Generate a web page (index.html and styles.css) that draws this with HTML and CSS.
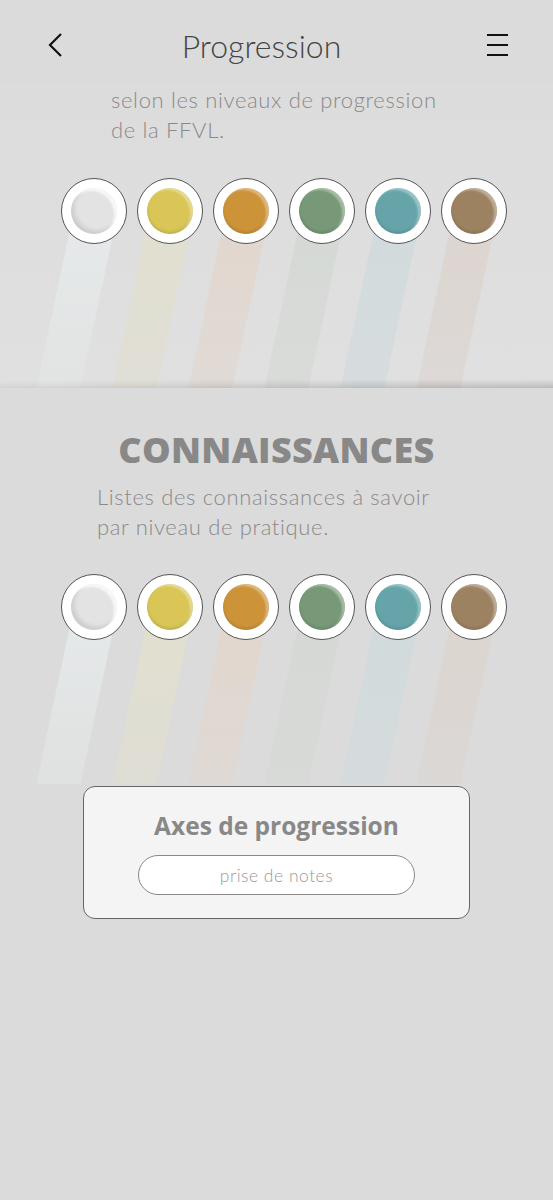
FILE: index.html
```html
<!DOCTYPE html>
<html lang="fr">
<head>
<meta charset="utf-8">
<title>Progression</title>
<link rel="stylesheet" href="styles.css">
</head>
<body>
<div class="screen">
  <header class="topbar">
    <svg class="icon back" width="24" height="30" viewBox="0 0 24 30"><path d="M17 4 L6 15 L17 26" fill="none" stroke="#111" stroke-width="2.2"/></svg>
    <h1 class="title">Progression</h1>
    <svg class="icon menu" width="24" height="30" viewBox="0 0 24 30"><path d="M2 5 H23 M2 15 H23 M2 25 H23" fill="none" stroke="#111" stroke-width="2.2"/></svg>
  </header>

  <section class="panel panel-top">
    <p class="intro">selon les niveaux de progression<br>de la FFVL.</p>
    <div class="levels">
      <div class="level lv-white"><span class="ring"><span class="dot"></span></span><span class="stripe"></span></div>
      <div class="level lv-yellow"><span class="ring"><span class="dot"></span></span><span class="stripe"></span></div>
      <div class="level lv-orange"><span class="ring"><span class="dot"></span></span><span class="stripe"></span></div>
      <div class="level lv-green"><span class="ring"><span class="dot"></span></span><span class="stripe"></span></div>
      <div class="level lv-teal"><span class="ring"><span class="dot"></span></span><span class="stripe"></span></div>
      <div class="level lv-brown"><span class="ring"><span class="dot"></span></span><span class="stripe"></span></div>
    </div>
  </section>

  <section class="panel panel-know">
    <h2 class="heading">CONNAISSANCES</h2>
    <p class="intro intro-know">Listes des connaissances à savoir<br>par niveau de pratique.</p>
    <div class="levels">
      <div class="level lv-white"><span class="ring"><span class="dot"></span></span><span class="stripe"></span></div>
      <div class="level lv-yellow"><span class="ring"><span class="dot"></span></span><span class="stripe"></span></div>
      <div class="level lv-orange"><span class="ring"><span class="dot"></span></span><span class="stripe"></span></div>
      <div class="level lv-green"><span class="ring"><span class="dot"></span></span><span class="stripe"></span></div>
      <div class="level lv-teal"><span class="ring"><span class="dot"></span></span><span class="stripe"></span></div>
      <div class="level lv-brown"><span class="ring"><span class="dot"></span></span><span class="stripe"></span></div>
    </div>
    <div class="card">
      <div class="card-title">Axes de progression</div>
      <div class="notes">prise de notes</div>
    </div>
  </section>
</div>
</body>
</html>
```

FILE: styles.css
```css
html, body {
  margin: 0;
  padding: 0;
  background: #dbdbdb;
}
body {
  font-family: Lato, "Open Sans", "Liberation Sans", sans-serif;
  color: #444;
}
.screen {
  width: 553px;
  min-height: 1200px;
  background: #dbdbdb;
  overflow: hidden;
}
.topbar {
  height: 78px;
  padding: 6px 44px 0 44px;
  display: flex;
  align-items: center;
  justify-content: space-between;
}
.icon { display: block; }
.title {
  margin: 0 30px 0 0;
  font-size: 32px;
  font-weight: 300;
  color: #444;
  letter-spacing: 0;
}
.panel { position: relative; }
.panel-top {
  padding-top: 1px;
  background: linear-gradient(#dcdcdc, #e0e0e0);
}
.panel-top::after {
  content: "";
  position: absolute;
  left: 0;
  right: 0;
  bottom: 0;
  height: 9px;
  background: linear-gradient(to bottom, rgba(0,0,0,0), rgba(0,0,0,0.06)),
              linear-gradient(to right, rgba(0,0,0,0), rgba(0,0,0,0.12));
  -webkit-mask: linear-gradient(to bottom, transparent, #000);
  mask: linear-gradient(to bottom, transparent, #000);
}
.intro {
  margin: 0 0 0 111px;
  font-size: 22px;
  line-height: 30px;
  font-weight: 300;
  letter-spacing: 0.65px;
  color: #8a8a8a;
}
.levels {
  display: flex;
  gap: 10px;
  padding-left: 61px;
  height: 210px;
  margin-top: 33px;
}
.level {
  width: 66px;
  display: flex;
  flex-direction: column;
  align-items: center;
}
.ring {
  position: relative;
  z-index: 2;
  box-sizing: border-box;
  width: 66px;
  height: 66px;
  border-radius: 50%;
  background: #fff;
  border: 1px solid #555;
  display: flex;
  align-items: center;
  justify-content: center;
  flex: none;
}
.dot {
  width: 46px;
  height: 46px;
  border-radius: 50%;
  background: var(--c);
  box-shadow: inset -3px 2px 2px rgba(255,255,255,0.35), inset 0 -2px 3px rgba(0,0,0,0.12);
}
.stripe {
  display: block;
  width: 44px;
  margin-left: -4px;
  height: 158px;
  margin-top: -14px;
  transform: skewX(-12deg);
  transform-origin: top;
  background: linear-gradient(to bottom, var(--s), var(--s2));
}
.lv-white  { --c: #e2e2e2; --s: rgba(232,236,236,0.8); --s2: rgba(228,231,231,0.5); }
.lv-yellow { --c: #d9c657; --s: rgba(226,224,206,0.9); --s2: rgba(224,222,210,0.7); }
.lv-orange { --c: #cc9339; --s: rgba(226,214,204,0.9); --s2: rgba(224,216,210,0.7); }
.lv-green  { --c: #779977; --s: rgba(212,216,212,0.9); --s2: rgba(214,217,214,0.7); }
.lv-teal   { --c: #65a5aa; --s: rgba(208,218,220,0.9); --s2: rgba(211,219,221,0.7); }
.lv-brown  { --c: #9d8262; --s: rgba(220,212,206,0.9); --s2: rgba(220,214,210,0.7); }
.lv-white .dot {
  background: #e3e3e3;
  box-shadow: inset -3px 3px 2px rgba(255,255,255,0.7), inset 3px -3px 4px rgba(0,0,0,0.1);
}
.panel-know {
  padding-top: 40px;
  background: #dbdbdb;
}
.heading {
  margin: 0;
  text-align: center;
  font-family: "Open Sans", Lato, sans-serif;
  font-size: 36px;
  line-height: 44px;
  font-weight: 800;
  color: #888;
  letter-spacing: 0.3px;
}
.intro-know {
  margin: 10px 0 0 97px;
}
.panel-know .levels {
  margin-top: 32px;
  height: 211px;
}
.card {
  box-sizing: border-box;
  width: 387px;
  margin: 1px 0 0 83px;
  border: 1px solid #666;
  border-radius: 12px;
  background: #f4f4f4;
  padding: 24px 0 23px;
  display: flex;
  flex-direction: column;
  align-items: center;
}
.card-title {
  font-family: "Open Sans", Lato, sans-serif;
  font-size: 24.5px;
  line-height: 30px;
  font-weight: 700;
  color: #888;
}
.notes {
  box-sizing: border-box;
  margin-top: 14px;
  width: 277px;
  height: 40px;
  border: 1px solid #888;
  border-radius: 20px;
  background: #fff;
  display: flex;
  align-items: center;
  justify-content: center;
  font-size: 17.5px;
  font-weight: 300;
  letter-spacing: 0.5px;
  color: #999;
}
```
